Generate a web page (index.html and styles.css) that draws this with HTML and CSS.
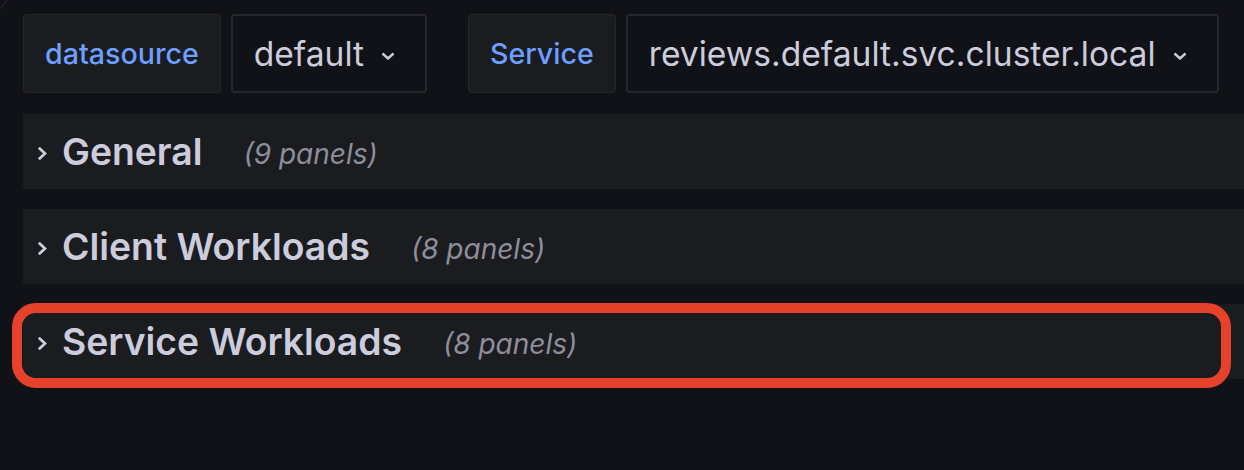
FILE: index.html
```html
<!DOCTYPE html>
<html>
<head>
<meta charset="utf-8">
<link rel="stylesheet" href="styles.css">
</head>
<body>
<div class="corner"></div>
<div class="toolbar">
  <div class="var">
    <div class="label">datasource</div>
    <div class="value">default<svg class="caret" viewBox="0 0 14 8"><path d="M1.5 1.5 L7 6.5 L12.5 1.5"/></svg></div>
  </div>
  <div class="var">
    <div class="label">Service</div>
    <div class="value wide">reviews.default.svc.cluster.local<svg class="caret" viewBox="0 0 14 8"><path d="M1.5 1.5 L7 6.5 L12.5 1.5"/></svg></div>
  </div>
</div>
<div class="rows">
  <div class="row">
    <svg class="chev" viewBox="0 0 10 15"><path d="M1.8 1.8 L8 7.5 L1.8 13.2"/></svg>
    <span class="title">General</span><span class="count">(9 panels)</span>
  </div>
  <div class="row">
    <svg class="chev" viewBox="0 0 10 15"><path d="M1.8 1.8 L8 7.5 L1.8 13.2"/></svg>
    <span class="title">Client Workloads</span><span class="count">(8 panels)</span>
  </div>
  <div class="row">
    <svg class="chev" viewBox="0 0 10 15"><path d="M1.8 1.8 L8 7.5 L1.8 13.2"/></svg>
    <span class="title">Service Workloads</span><span class="count">(8 panels)</span>
  </div>
</div>
<div class="highlight"></div>
</body>
</html>
```
FILE: styles.css
```css
html, body {
  margin: 0;
  padding: 0;
  background: #111217;
  width: 1244px;
  height: 470px;
  overflow: hidden;
  font-family: Inter, "Noto Sans", sans-serif;
  color: #ccccdc;
}
.corner {
  position: absolute;
  left: -42px;
  top: -40px;
  width: 50px;
  height: 53px;
  border-radius: 50%;
  border: 1px solid #2a2b31;
}
.toolbar {
  display: flex;
  gap: 41px;
  padding: 14px 0 0 23px;
  height: 79px;
}
.var {
  display: flex;
  gap: 10px;
}
.label {
  box-sizing: border-box;
  height: 79px;
  display: flex;
  align-items: center;
  justify-content: center;
  padding: 0 21px;
  background: #1b1c20;
  border: 1px solid #26272c;
  border-radius: 4px;
  color: #6e9fff;
  font-weight: 500;
  font-size: 28.6px;
}
.value {
  box-sizing: border-box;
  height: 79px;
  display: flex;
  align-items: center;
  padding: 0 30px 0 21px;
  background: #111217;
  border: 2px solid #26272c;
  border-radius: 4px;
  font-size: 33.6px;
  color: #ccccdc;
}
.caret {
  width: 14px;
  height: 8px;
  margin-left: 17px;
  margin-top: 4px;
  fill: none;
  stroke: #ccccdc;
  stroke-width: 2.4;
}
.rows {
  display: flex;
  flex-direction: column;
  gap: 20px;
  margin: 21px 0 0 23px;
}
.row {
  height: 75px;
  background: #1b1c20;
  display: flex;
  align-items: center;
  padding-left: 14px;
}
.chev {
  width: 10px;
  height: 15px;
  fill: none;
  stroke: #ccccdc;
  stroke-width: 2.8;
  margin-right: 15px;
  margin-top: 3px;
}
.title {
  font-size: 37.3px;
  font-weight: 600;
  color: #ccccdc;
}
.count {
  margin-left: 41px;
  font-size: 28px;
  font-style: italic;
  color: #8e8e9a;
  margin-top: 4px;
}
.highlight {
  position: absolute;
  left: 12px;
  top: 303px;
  width: 1219px;
  height: 85px;
  box-sizing: border-box;
  border: 10px solid #e6412a;
  border-radius: 24px;
}
```
